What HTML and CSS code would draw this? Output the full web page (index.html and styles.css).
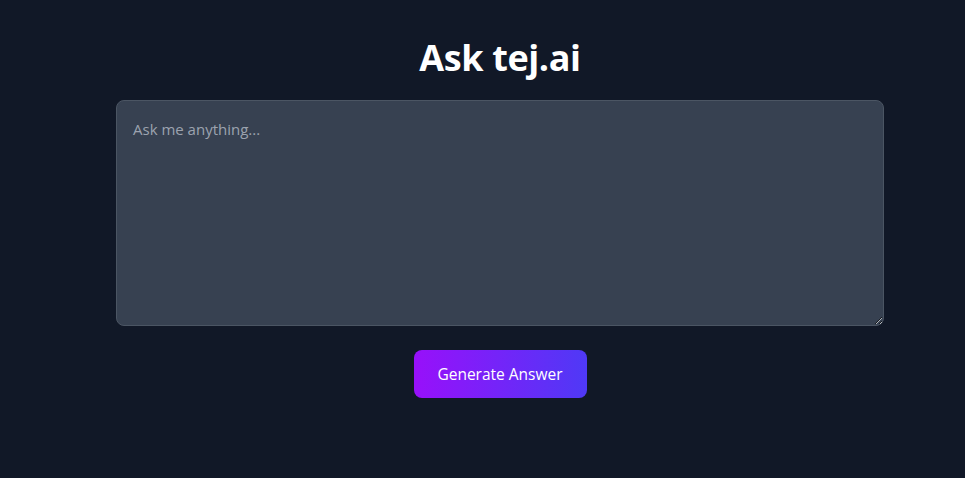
FILE: index.html
```html
<!DOCTYPE html>
<html lang="en">
<head>
<meta charset="utf-8">
<title>Ask tej.ai</title>
<link rel="stylesheet" href="styles.css">
</head>
<body>
<div class="page">
  <main class="container">
    <h1 class="title">Ask tej.ai</h1>
    <textarea class="prompt" rows="8" placeholder="Ask me anything..."></textarea>
    <button class="generate" type="button">Generate Answer</button>
  </main>
</div>
</body>
</html>
```

FILE: styles.css
```css
html, body {
  margin: 0;
  padding: 0;
  background: #111827;
  min-height: 100%;
}
body {
  font-family: "Open Sans", "Noto Sans", sans-serif;
  color: #ffffff;
}
.page {
  padding-left: 35px;
}
.container {
  max-width: 768px;
  margin: 0 auto;
  padding-top: 38px;
  display: flex;
  flex-direction: column;
  align-items: center;
}
.title {
  margin: 0 0 22px 0;
  font-size: 36px;
  line-height: 40px;
  font-weight: 700;
  letter-spacing: -0.4px;
}
.prompt {
  box-sizing: border-box;
  width: 100%;
  height: 226px;
  padding: 16px;
  background: #374151;
  border: 1px solid #4b5563;
  border-radius: 8px;
  color: #ffffff;
  font-family: "Open Sans", "Noto Sans", sans-serif;
  font-size: 15px;
  line-height: 24px;
  outline: none;
  resize: vertical;
}
.prompt::placeholder {
  color: #9ca3af;
}
.generate {
  margin-top: 24px;
  width: 173px;
  height: 48px;
  border: none;
  border-radius: 8px;
  background: linear-gradient(to right, #9810fa, #4f39f6);
  color: #ffffff;
  font-family: "Open Sans", "Noto Sans", sans-serif;
  font-size: 15.5px;
  line-height: 24px;
  cursor: pointer;
}
```
